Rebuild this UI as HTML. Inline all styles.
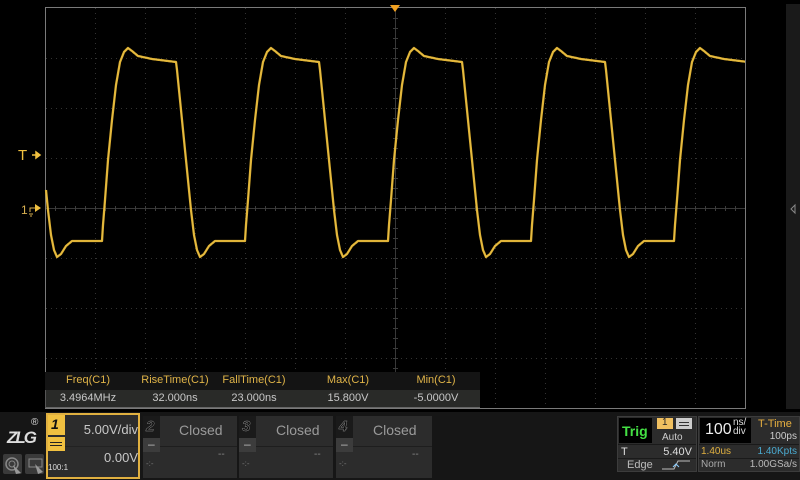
<!DOCTYPE html>
<html><head><meta charset="utf-8"><style>
*{margin:0;padding:0;box-sizing:border-box}
body{width:800px;height:480px;background:#000;position:relative;overflow:hidden;font-family:"Liberation Sans","DejaVu Sans",sans-serif}
.a{position:absolute}
.t{position:absolute;white-space:nowrap}
</style></head><body>
<svg class="a" style="left:0;top:0" width="800" height="412" viewBox="0 0 800 412">
<g id="grid" stroke="#333" stroke-width="1" stroke-dasharray="1 4"></g>
<rect x="45.5" y="7.5" width="700" height="401" fill="none" stroke="#7a7a7a"/>
<line x1="46" y1="208.5" x2="745" y2="208.5" stroke="#383838"/>
<line x1="395.5" y1="8" x2="395.5" y2="408" stroke="#383838"/>
<g id="ticks" stroke="#444"></g>
<path id="wave" fill="none" stroke="#dcae2e" stroke-width="2.3" stroke-linejoin="round"/>
<path id="wave2" fill="none" stroke="#f0cc60" stroke-width="0.8" opacity="0.6"/>
<polygon points="390,5 400,5 395,12" fill="#f0a020"/>
<text x="18" y="160" fill="#f0c040" font-size="15" font-family="Liberation Sans">T</text>
<path d="M32 155 H39 M36 152 L40 155 L36 158 Z" stroke="#f0c040" fill="#f0c040" stroke-width="1.5"/>
<text x="21" y="214" fill="#d8b050" font-size="12" font-family="Liberation Sans">1</text>
<path d="M30 212 V208 H35 M29 214 H33 M30 216 H32" stroke="#d8b050" fill="none"/>
<polygon points="35,204 41,208 35,212" fill="#f0c040"/>
<rect x="786" y="4" width="14" height="405" fill="#1a1a1a"/>
<polygon points="795,205 791,209 795,213" fill="none" stroke="#888"/>
</svg>

<div class="a" style="left:45px;top:372px;width:435px;height:18px;background:#141414"></div>
<div class="a" style="left:45px;top:390px;width:435px;height:18px;background:#292a28;border-bottom:1px solid #666;border-left:1px solid #555"></div>
<div class="t" style="left:45px;top:374px;width:86px;text-align:center;color:#e0b448;font-size:11px">Freq(C1)</div>
<div class="t" style="left:132px;top:374px;width:86px;text-align:center;color:#e0b448;font-size:11px">RiseTime(C1)</div>
<div class="t" style="left:211px;top:374px;width:86px;text-align:center;color:#e0b448;font-size:11px">FallTime(C1)</div>
<div class="t" style="left:305px;top:374px;width:86px;text-align:center;color:#e0b448;font-size:11px">Max(C1)</div>
<div class="t" style="left:393px;top:374px;width:86px;text-align:center;color:#e0b448;font-size:11px">Min(C1)</div>
<div class="t" style="left:45px;top:392px;width:86px;text-align:center;color:#c8c8c8;font-size:11px">3.4964MHz</div>
<div class="t" style="left:132px;top:392px;width:86px;text-align:center;color:#c8c8c8;font-size:11px">32.000ns</div>
<div class="t" style="left:211px;top:392px;width:86px;text-align:center;color:#c8c8c8;font-size:11px">23.000ns</div>
<div class="t" style="left:305px;top:392px;width:86px;text-align:center;color:#c8c8c8;font-size:11px">15.800V</div>
<div class="t" style="left:393px;top:392px;width:86px;text-align:center;color:#c8c8c8;font-size:11px">-5.0000V</div>

<div class="a" style="left:0;top:412px;width:800px;height:68px;background:#161616"></div>
<div class="t" style="left:7px;top:428px;color:#ddd;font-size:17px;font-weight:bold;font-style:italic;letter-spacing:-2px">ZLG</div>
<div class="t" style="left:31px;top:417px;color:#ddd;font-size:10px">®</div>
<div class="a" style="left:3px;top:454px;width:19px;height:20px;background:#3a3a3a;border-radius:2px"></div>
<div class="a" style="left:25px;top:454px;width:19px;height:20px;background:#3a3a3a;border-radius:2px"></div>
<svg class="a" style="left:3px;top:454px" width="42" height="20"><circle cx="9" cy="10" r="6" fill="none" stroke="#888" stroke-width="1.5"/><circle cx="9" cy="10" r="3" fill="none" stroke="#888"/><path d="M10 11 L18 19 L13 20 Z" fill="#999"/><rect x="26" y="5" width="13" height="8" fill="none" stroke="#888"/><path d="M32 10 L40 18 L35 20 Z" fill="#999"/></svg>

<div class="a" style="left:46px;top:413px;width:94px;height:66px;background:#2c2c2c;border:2px solid #e0b040"></div>
<div class="a" style="left:48px;top:415px;width:17px;height:20px;background:#f0c040"></div>
<div class="t" style="left:51px;top:416px;color:#111;font-size:14px;font-weight:bold;font-style:italic">1</div>
<div class="a" style="left:48px;top:437px;width:17px;height:14px;background:#f0c040"></div>
<div class="a" style="left:50px;top:442px;width:12px;height:1px;background:#222"></div>
<div class="a" style="left:50px;top:445px;width:12px;height:1px;background:#222"></div>
<div class="a" style="left:65px;top:446px;width:73px;height:1px;background:#222"></div>
<div class="t" style="left:70px;top:422px;width:68px;text-align:right;color:#c8c8c8;font-size:13px">5.00V/div</div>
<div class="t" style="left:70px;top:450px;width:68px;text-align:right;color:#c8c8c8;font-size:13px">0.00V</div>
<div class="t" style="left:48px;top:463px;color:#ddd;font-size:8px">100:1</div>

<div class="a" style="left:143px;top:416px;width:94px;height:62px;background:#2c2c2c"></div>
<div class="a" style="left:239px;top:416px;width:94px;height:62px;background:#2c2c2c"></div>
<div class="a" style="left:336px;top:416px;width:96px;height:62px;background:#2c2c2c"></div>
<div class="a" style="left:143px;top:416px;width:17px;height:22px;background:#1a1a1a"></div>
<div class="a" style="left:239px;top:416px;width:17px;height:22px;background:#1a1a1a"></div>
<div class="a" style="left:336px;top:416px;width:17px;height:22px;background:#1a1a1a"></div>
<div class="a" style="left:143px;top:438px;width:17px;height:14px;background:#3c3c3c"></div>
<div class="a" style="left:239px;top:438px;width:17px;height:14px;background:#3c3c3c"></div>
<div class="a" style="left:336px;top:438px;width:17px;height:14px;background:#3c3c3c"></div>
<div class="a" style="left:160px;top:446px;width:77px;height:1px;background:#1e1e1e"></div>
<div class="a" style="left:256px;top:446px;width:77px;height:1px;background:#1e1e1e"></div>
<div class="a" style="left:353px;top:446px;width:79px;height:1px;background:#1e1e1e"></div>
<div class="t" style="left:146px;top:418px;color:#0c0c0c;font-size:15px;font-weight:bold;font-style:italic;-webkit-text-stroke:0.4px #999">2</div>
<div class="t" style="left:242px;top:418px;color:#0c0c0c;font-size:15px;font-weight:bold;font-style:italic;-webkit-text-stroke:0.4px #999">3</div>
<div class="t" style="left:339px;top:418px;color:#0c0c0c;font-size:15px;font-weight:bold;font-style:italic;-webkit-text-stroke:0.4px #999">4</div>
<div class="t" style="left:148px;top:437px;color:#bbb;font-size:12px">–</div>
<div class="t" style="left:244px;top:437px;color:#bbb;font-size:12px">–</div>
<div class="t" style="left:341px;top:437px;color:#bbb;font-size:12px">–</div>
<div class="t" style="left:179px;top:422px;color:#9a9a9a;font-size:14px">Closed</div>
<div class="t" style="left:276px;top:422px;color:#9a9a9a;font-size:14px">Closed</div>
<div class="t" style="left:373px;top:422px;color:#9a9a9a;font-size:14px">Closed</div>
<div class="t" style="left:218px;top:449px;color:#888;font-size:10px">--</div>
<div class="t" style="left:314px;top:449px;color:#888;font-size:10px">--</div>
<div class="t" style="left:412px;top:449px;color:#888;font-size:10px">--</div>
<div class="t" style="left:146px;top:459px;color:#777;font-size:8px">-:-</div>
<div class="t" style="left:242px;top:459px;color:#777;font-size:8px">-:-</div>
<div class="t" style="left:339px;top:459px;color:#777;font-size:8px">-:-</div>

<div class="a" style="left:617px;top:416px;width:80px;height:56px;background:#2c2c2c;border:1px solid #3c3c3c"></div>
<div class="a" style="left:619px;top:418px;width:33px;height:25px;background:#000"></div>
<div class="t" style="left:622px;top:423px;color:#44e044;font-size:14px;font-weight:bold">Trig</div>
<div class="a" style="left:657px;top:418px;width:16px;height:11px;background:#f0c060"></div>
<div class="t" style="left:662px;top:417px;color:#222;font-size:10px">1</div>
<div class="a" style="left:676px;top:418px;width:16px;height:11px;background:#ccc"></div>
<div class="a" style="left:679px;top:422px;width:10px;height:1px;background:#333"></div>
<div class="a" style="left:679px;top:425px;width:10px;height:1px;background:#333"></div>
<div class="t" style="left:662px;top:432px;color:#ccc;font-size:10px">Auto</div>
<div class="a" style="left:618px;top:444px;width:78px;height:1px;background:#1a1a1a"></div>
<div class="a" style="left:618px;top:458px;width:78px;height:1px;background:#1a1a1a"></div>
<div class="t" style="left:621px;top:446px;color:#ddd;font-size:11px">T</div>
<div class="t" style="left:660px;top:446px;width:32px;text-align:right;color:#ddd;font-size:11px">5.40V</div>
<div class="t" style="left:627px;top:459px;color:#bbb;font-size:11px">Edge</div>
<svg class="a" style="left:660px;top:459px" width="32" height="12"><path d="M2 10 H14 L18 2 H30" fill="none" stroke="#bbb"/><path d="M13 8 L16 5 L19 8" fill="none" stroke="#8cf"/></svg>

<div class="a" style="left:698px;top:416px;width:102px;height:56px;background:#2c2c2c;border:1px solid #3c3c3c"></div>
<div class="a" style="left:700px;top:418px;width:51px;height:25px;background:#000"></div>
<div class="t" style="left:705px;top:421px;color:#eee;font-size:16px">100</div>
<div class="t" style="left:733px;top:418px;color:#ddd;font-size:10px;line-height:9px">ns/<br>div</div>
<div class="t" style="left:758px;top:418px;color:#e8b040;font-size:11px">T-Time</div>
<div class="t" style="left:763px;top:431px;width:34px;text-align:right;color:#ccc;font-size:10px">100ps</div>
<div class="a" style="left:699px;top:444px;width:100px;height:1px;background:#1a1a1a"></div>
<div class="a" style="left:699px;top:458px;width:100px;height:1px;background:#1a1a1a"></div>
<div class="t" style="left:701px;top:446px;color:#e0b040;font-size:10px">1.40us</div>
<div class="t" style="left:750px;top:446px;width:47px;text-align:right;color:#4aaad0;font-size:10px">1.40Kpts</div>
<div class="t" style="left:701px;top:459px;color:#aaa;font-size:10px">Norm</div>
<div class="t" style="left:740px;top:459px;width:57px;text-align:right;color:#bbb;font-size:10px">1.00GSa/s</div>

<script>
(function(){
var ns="http://www.w3.org/2000/svg",g=document.getElementById('grid'),tk=document.getElementById('ticks');
for(var x=95;x<745;x+=50){if(x==395)continue;var l=document.createElementNS(ns,'line');l.setAttribute('x1',x+.5);l.setAttribute('x2',x+.5);l.setAttribute('y1',8);l.setAttribute('y2',408);g.appendChild(l);}
[58,108,158,258,308,358].forEach(function(y){var l=document.createElementNS(ns,'line');l.setAttribute('x1',46);l.setAttribute('x2',745);l.setAttribute('y1',y+.5);l.setAttribute('y2',y+.5);g.appendChild(l);});
var d="";for(var x=55;x<745;x+=10){d+="M"+(x+.5)+" 206V211";}
for(var y=18;y<408;y+=10){d+="M393 "+(y+.5)+"H398";}
var p=document.createElementNS(ns,'path');p.setAttribute('d',d);p.setAttribute('stroke','#3c3c3c');tk.appendChild(p);
var K=[[0,241],[1,225],[3,200],[6,160],[10,120],[14,85],[18,62],[22,52],[26,48],[30,51],[36,56],[50,59],[74,62],[75,70],[78,100],[82,140],[86,180],[89,210],[92,235],[95,250],[98,257],[102,254],[107,246],[113,241],[143,241]];
function f(t){t=((t%143)+143)%143;for(var i=0;i<K.length-1;i++){if(t>=K[i][0]&&t<=K[i+1][0]){var a=K[i],b=K[i+1];return a[1]+(b[1]-a[1])*(t-a[0])/(b[0]-a[0]);}}return 241;}
var s="";for(var x=46;x<=745;x+=0.5){s+=(s?"L":"M")+x+" "+f(x-102).toFixed(1);}
document.getElementById('wave').setAttribute('d',s);document.getElementById('wave2').setAttribute('d',s);
})();
</script>
</body></html>
